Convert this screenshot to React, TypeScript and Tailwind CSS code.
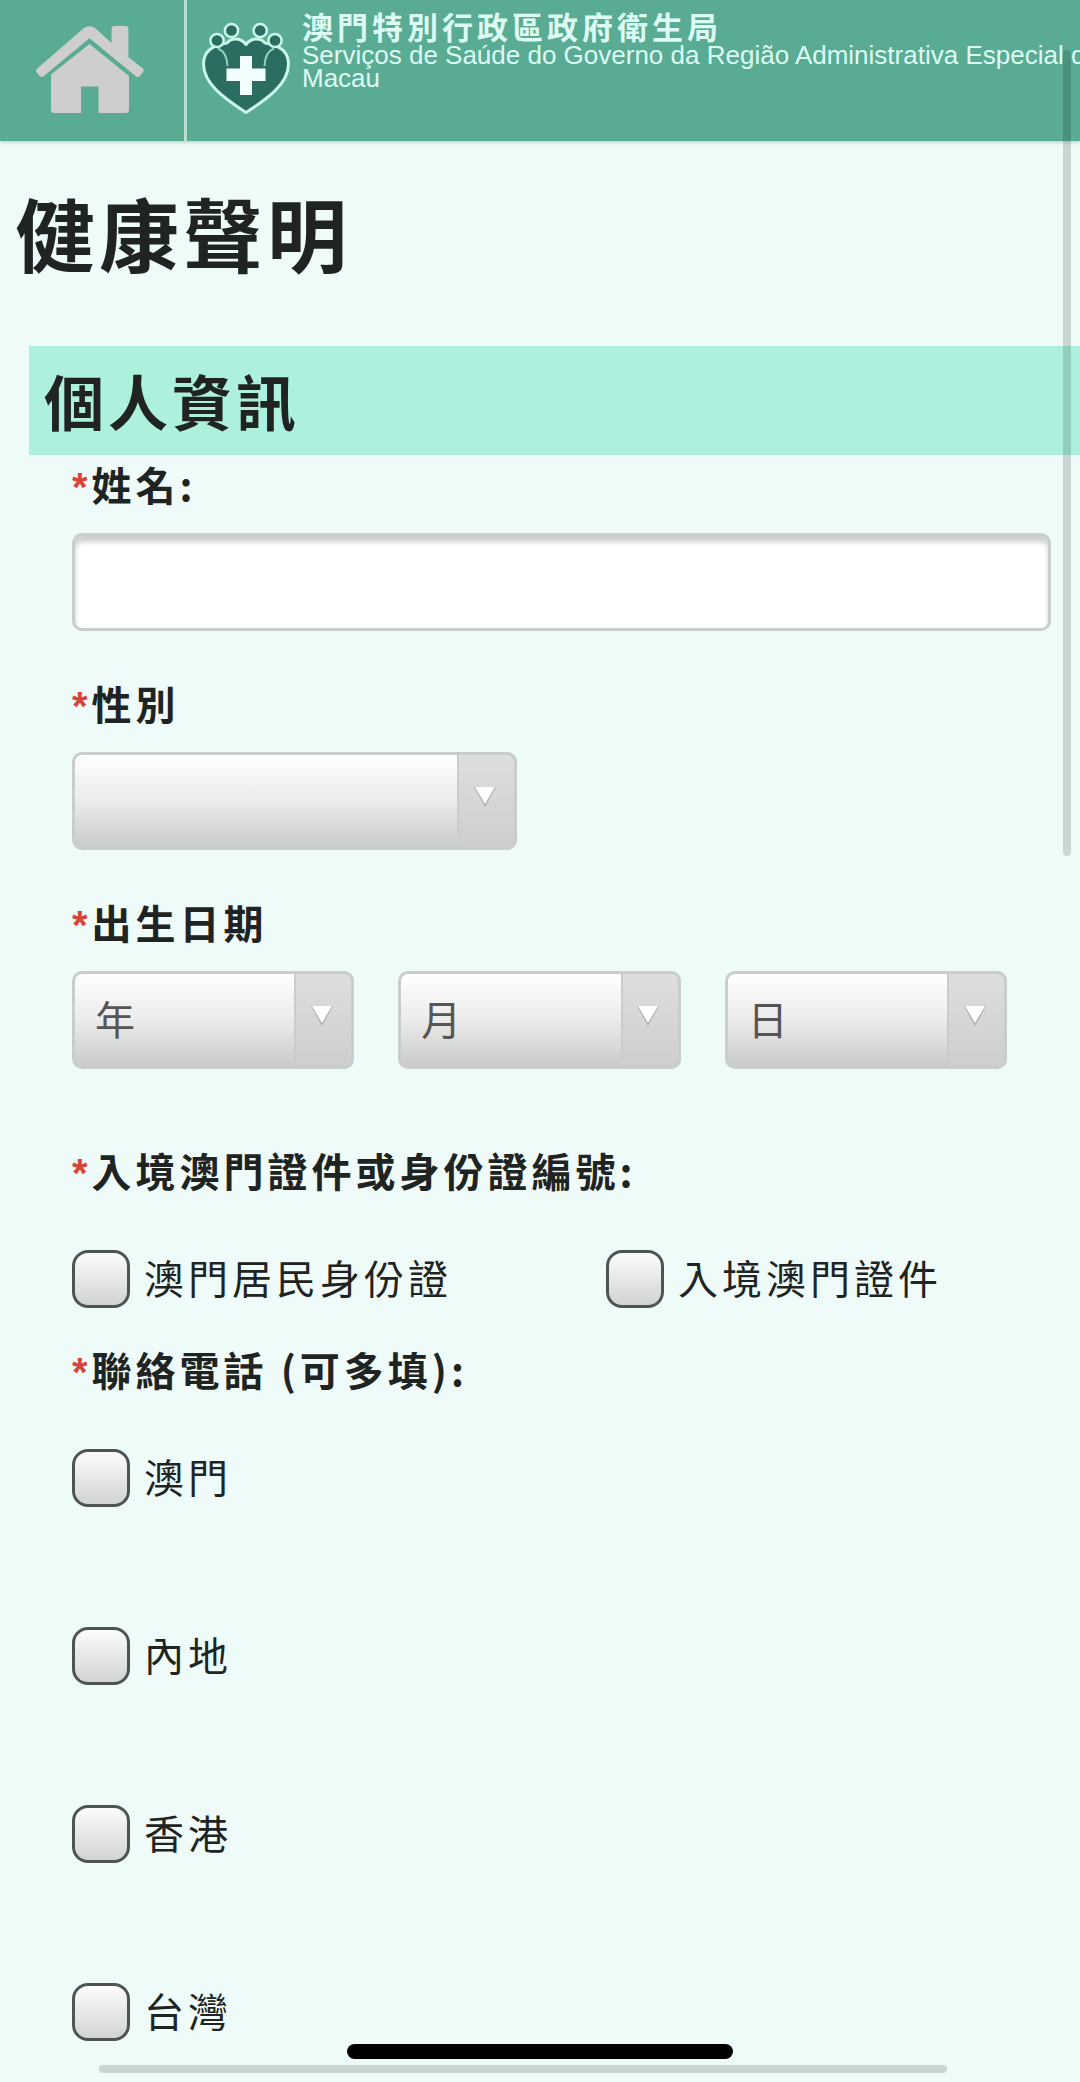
import { useId, type ReactNode } from "react";

function HomeIcon() {
  return (
    <svg viewBox="0 0 108 88" className="h-[88px] w-[108px]" fill="#cdcecd" aria-hidden="true">
      <path d="M75.6 17V3Q75.6 0 78.6 0H89.4Q92.4 0 92.4 3V31L106.5 42.2Q108.6 44 107 46L103.8 50Q102 51.8 99.8 50.2L53.5 12.3L7.6 50.2Q5.4 51.8 3.6 50L0.8 46.4Q-0.8 44.4 1.2 42.4L48 2Q53.5 -1.6 59 2Z" />
      <path d="M53.5 18L93 50V83.5Q93 87 89.5 87H62.5V60.5H45V87H18.5Q15 87 15 83.5V48.5Z" />
    </svg>
  );
}

function HealthLogo() {
  return (
    <svg viewBox="0 0 88 94" className="h-[94px] w-[88px] shrink-0" aria-hidden="true">
      <path
        d="M44 23.5C39 17 30 16 25 22C11 24 1.5 30 1.5 43C1.5 63 23 78 44 91.5C65 78 86.5 63 86.5 43C86.5 30 77 24 63 22C58 16 49 17 44 23.5Z"
        fill="#2c6d61"
        stroke="#c9f7ec"
        strokeWidth="3"
        strokeLinejoin="round"
      />
      <g fill="#2c6d61" stroke="#c9f7ec" strokeWidth="2.5">
        <circle cx="15" cy="19.5" r="6.6" />
        <circle cx="29.5" cy="9.5" r="6.6" />
        <circle cx="58.2" cy="9.5" r="6.6" />
        <circle cx="73" cy="19.5" r="6.6" />
      </g>
      <path
        d="M16 27.5Q25 31 25.5 45M72 27.5Q63 31 62.5 45"
        fill="none"
        stroke="#8fd3c3"
        strokeWidth="2"
      />
      <path d="M38 35H50V47.5H63.5V60H50V74H38V60H24.5V47.5H38Z" fill="#f3fffc" />
    </svg>
  );
}

function Required() {
  return <span className="font-['Liberation_Sans',Arial,sans-serif] leading-[0px] text-[#d8433a]">*</span>;
}

const labelClass = "block font-bold leading-[40px]";

function SelectBox({ label, labelledBy, text }: { label?: string; labelledBy?: string; text: string }) {
  return (
    <div className="relative">
      <select
        aria-label={label}
        aria-labelledby={labelledBy}
        className="block h-[98px] w-full appearance-none rounded-[10px] border-3 border-[#c9cecd] bg-linear-to-b from-white via-[#ebebeb] to-[#cacbcb] pr-16 pb-1 pl-5 text-[#555]"
      >
        <option>{text}</option>
      </select>
      <span className="pointer-events-none absolute inset-y-0 right-0 flex w-[60px] items-center justify-center rounded-r-[10px] border-3 border-l-2 border-[#c9cecd] bg-linear-to-b from-[#dedede] to-[#cecece] pr-1 pb-2">
        <svg viewBox="0 0 24 22" className="h-[22px] w-6" aria-hidden="true">
          <path d="M1 1H23L12 21Z" fill="#b0b0b0" />
          <path d="M2 1H22L12 18Z" fill="#fff" />
        </svg>
      </span>
    </div>
  );
}

function CheckOption({ children }: { children: ReactNode }) {
  const id = useId();
  return (
    <div className="flex items-center gap-[14px]">
      <input
        id={id}
        type="checkbox"
        className="size-[58px] shrink-0 appearance-none rounded-2xl border-3 border-[#4d5453] bg-linear-to-b from-[#fcfcfc] to-[#d2d3d3] checked:to-[#5aab93]"
      />
      <label htmlFor={id} className="pb-1 leading-[40px]">
        {children}
      </label>
    </div>
  );
}

const regions = ["澳門", "內地", "香港", "台灣"];

export default function App() {
  return (
    <div className="relative min-h-screen overflow-hidden bg-[#eefbf9] font-['Noto_Sans_CJK_TC','Noto_Sans',sans-serif] text-[40px] tracking-widest text-[#1f2423]">
      <header className="flex h-[141px] bg-[#5aab93] text-[#dcfbf3] shadow-[0_2px_3px_#c4dbd4]">
        <a
          href="#home"
          aria-label="主頁"
          className="flex w-[187px] shrink-0 items-start border-r-3 border-[#b4e0d2] pt-[26px] pl-9"
        >
          <HomeIcon />
        </a>
        <div className="flex min-w-0 gap-3 pl-[15px]">
          <div className="pt-[21px]">
            <HealthLogo />
          </div>
          <div className="pt-[7px]">
            <p className="text-[31px] leading-[37px] font-bold whitespace-nowrap">澳門特別行政區政府衛生局</p>
            <p className="font-['Liberation_Sans',Arial,sans-serif] text-[26px] leading-[23px] tracking-normal whitespace-nowrap">
              Serviços de Saúde do Governo da Região Administrativa Especial de
              <br />
              Macau
            </p>
          </div>
        </div>
      </header>

      <main>
        <h1 className="mt-[50px] px-[15px] text-[80px] leading-[80px] font-bold">健康聲明</h1>

        <form className="mt-[75px] pl-[29px]">
          <h2 className="bg-[#aef0de] px-[15px] pt-6 pb-[25px] text-[60px] leading-[60px] font-bold">個人資訊</h2>

          <div className="mt-[9px] pr-[29px] pl-[43px]">
            <label htmlFor="name" className={labelClass}>
              <Required />
              姓名:
            </label>
            <input
              id="name"
              type="text"
              className="mt-[29px] block h-[98px] w-full rounded-[10px] border-3 border-[#c9cecd] bg-white px-5 shadow-[inset_0_6px_5px_#ccd1d0]"
            />

            <div id="gender" className={`${labelClass} mt-[52px]`}>
              <Required />
              性別
            </div>
            <div className="mt-[29px] w-5/11">
              <SelectBox labelledBy="gender" text="" />
            </div>

            <fieldset className="mt-[52px]">
              <legend className={labelClass}>
                <Required />
                出生日期
              </legend>
              <div className="mt-[29px] grid grid-cols-3">
                {["年", "月", "日"].map((part) => (
                  <div key={part} className="pr-11">
                    <SelectBox label={part} text={part} />
                  </div>
                ))}
              </div>
            </fieldset>

            <fieldset className="mt-[81px]">
              <legend className={labelClass}>
                <Required />
                入境澳門證件或身份證編號:
              </legend>
              <div className="mt-15 grid grid-cols-[6fr_5fr]">
                <CheckOption>澳門居民身份證</CheckOption>
                <CheckOption>入境澳門證件</CheckOption>
              </div>
            </fieldset>

            <fieldset className="mt-[41px]">
              <legend className={labelClass}>
                <Required />
                聯絡電話 (可多填):
              </legend>
              <div className="mt-15 flex flex-col gap-30">
                {regions.map((region) => (
                  <CheckOption key={region}>{region}</CheckOption>
                ))}
              </div>
            </fieldset>
          </div>
        </form>
      </main>

      {/* Scroll indicators and home bar float over the page */}
      <div className="pointer-events-none absolute top-[50px] right-[9px] h-[806px] w-2 rounded-full bg-black/15" />
      <div className="pointer-events-none absolute right-[133px] bottom-[9px] left-[99px] h-2 rounded-full bg-black/15" />
      <div className="pointer-events-none absolute inset-x-0 bottom-[23px] mx-auto h-[15px] w-[386px] rounded-full bg-black" />
    </div>
  );
}
